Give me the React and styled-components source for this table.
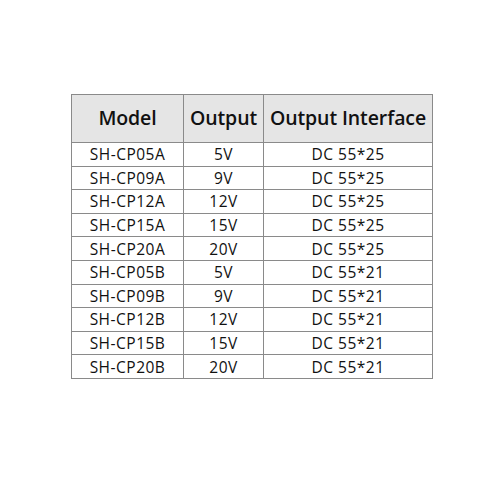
import React from 'react'
import styled, { createGlobalStyle } from 'styled-components'

const GlobalStyle = createGlobalStyle`
  html, body {
    margin: 0;
    padding: 0;
    background: #ffffff;
  }
  body {
    width: 500px;
    height: 500px;
    font-family: "Open Sans", "Noto Sans", sans-serif;
  }
`

const Page = styled.div`
  width: 500px;
  height: 500px;
  padding: 94px 0 0 71px;
  box-sizing: border-box;
`

const Table = styled.table`
  border-collapse: collapse;
  table-layout: fixed;
  width: 361px;
  color: #111111;
`

const HeadCell = styled.th`
  background: #e5e5e5;
  height: 44px;
  padding: 0 0 3px;
  border: 1px solid #8a8a8a;
  font-size: 19.5px;
  font-weight: 600;
  text-align: center;
  white-space: nowrap;
  letter-spacing: -0.1px;
`

const Cell = styled.td`
  height: 22.6px;
  padding: 0;
  border: 1px solid #8a8a8a;
  font-size: 15.5px;
  font-weight: 500;
  text-align: center;
  line-height: 22px;
  white-space: nowrap;
  letter-spacing: 0.5px;
`

const rows = [
  ['SH-CP05A', '5V', 'DC 55*25'],
  ['SH-CP09A', '9V', 'DC 55*25'],
  ['SH-CP12A', '12V', 'DC 55*25'],
  ['SH-CP15A', '15V', 'DC 55*25'],
  ['SH-CP20A', '20V', 'DC 55*25'],
  ['SH-CP05B', '5V', 'DC 55*21'],
  ['SH-CP09B', '9V', 'DC 55*21'],
  ['SH-CP12B', '12V', 'DC 55*21'],
  ['SH-CP15B', '15V', 'DC 55*21'],
  ['SH-CP20B', '20V', 'DC 55*21'],
]

export default function App() {
  return (
    <Page>
      <GlobalStyle />
      <Table>
        <colgroup>
          <col style={{ width: 112 }} />
          <col style={{ width: 80 }} />
          <col style={{ width: 169 }} />
        </colgroup>
        <thead>
          <tr>
            <HeadCell>Model</HeadCell>
            <HeadCell>Output</HeadCell>
            <HeadCell>Output Interface</HeadCell>
          </tr>
        </thead>
        <tbody>
          {rows.map(([model, out, iface]) => (
            <tr key={model}>
              <Cell>{model}</Cell>
              <Cell>{out}</Cell>
              <Cell>{iface}</Cell>
            </tr>
          ))}
        </tbody>
      </Table>
    </Page>
  )
}
